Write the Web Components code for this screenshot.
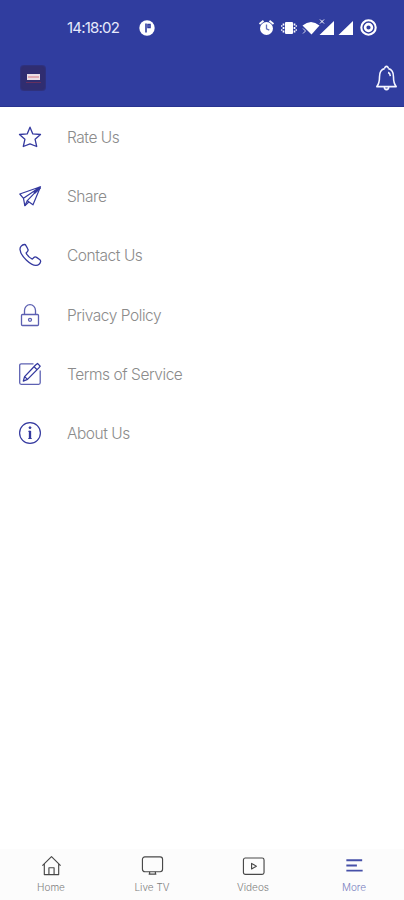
<!DOCTYPE html>
<html lang="en">
<head>
<meta charset="utf-8">
<title>More</title>
<style>
    html, body {
        height: 100%;
        margin: 0;
    }
    body {
        font-family: Inter, "Liberation Sans", sans-serif;
        background: #fff;
        overflow: hidden;
    }
</style>
</head>
<body>

<more-screen>
    <status-bar slot="header" time="14:18:02"></status-bar>
    <app-bar slot="header"></app-bar>

    <menu-row icon="star">Rate Us</menu-row>
    <menu-row icon="plane">Share</menu-row>
    <menu-row icon="phone">Contact Us</menu-row>
    <menu-row icon="lock">Privacy Policy</menu-row>
    <menu-row icon="edit">Terms of Service</menu-row>
    <menu-row icon="info">About Us</menu-row>

    <tab-item slot="tabs" icon="home">Home</tab-item>
    <tab-item slot="tabs" icon="tv">Live TV</tab-item>
    <tab-item slot="tabs" icon="video">Videos</tab-item>
    <tab-item slot="tabs" icon="more" active>More</tab-item>
</more-screen>

<script>

    // every icon is drawn in a 24 x 24 box
    const ICONS = {
        star: '<path d="M12 2.200 14.800 8.900l7.700.6-5.400 4.800 1.600 7.200-6.700-2.600-6.700 2.600 1.600-7.200L1.500 9.500l7.700-.6z"/>',
        plane: '<g stroke-width="1.200"><path d="M22.500 2.800 1.800 10l3.700 4.300zM5.500 14.300l1.300 7.400 3.700-3.400M22.500 2.800 9.300 16.700l5.700 4.100z"/><path d="M9.300 16.700l-2.500 5"/></g><path d="m22 3.500-6 5.500" stroke-width="2.600"/>',
        phone: '<path d="M6.300 1.500C4 1.800 1.800 4 2 6.500c.3 3.400 3.200 7.600 6.500 10.700 3.200 3 6.500 5.300 9.500 5.200 2.200-.1 4.200-1.700 4.600-3.700.2-1-.2-1.600-1-2.200l-3-2.100c-1-.7-1.900-.7-2.700.1l-1.600 1.600c-2.700-1.200-4.900-3.400-6.200-6.100l1.300-1.400c.9-.9.900-1.800.3-2.800L8 2.600c-.4-.8-.9-1.200-1.700-1.100z"/>',
        lock: '<g stroke-width="1.300" opacity=".8"><rect x="3.500" y="11.500" width="17" height="11" rx="1"/><path d="M6.500 11.500V7.500a5.500 5.800 0 0 1 11 0v4"/><circle cx="12" cy="16.800" r="1.500"/></g>',
        edit: '<path d="M15.500 1.800H3.200c-.9 0-1.500.6-1.500 1.500v17.500c0 .9.600 1.500 1.500 1.500h17.500c.9 0 1.500-.6 1.500-1.500V8.500" opacity=".8"/><path d="m17.600 3 1.900-1.500 2.700 2.600-1.600 2L9.500 17.400l-4.200 1.700 1.300-4.500zM16 4.600l3.100 3.100M6.600 14.600l2.900 2.800"/>',
        info: '<circle cx="12" cy="12" r="10.400" stroke-width="1.200"/><path d="M12 9.800v8.200" stroke-width="2.300"/><path d="M10.300 10.300h1.700M10.300 17.500h3.400" stroke-width="1"/><circle cx="12" cy="6.700" r="1" fill="currentColor" stroke-width=".8"/>',
        home: '<path d="M2.500 12.200 12 2.800l9.500 9.400M4.500 10.500v11h15v-11M9.300 21.500v-7.200h5.400v7.200"/>',
        tv: '<rect x="1.500" y="3" width="21" height="15.500" rx="2.500"/><path d="M9 18.500v2.200m6-2.200v2.200M8 21h8"/>',
        video: '<rect x="1.500" y="4.200" width="21.500" height="17" rx="2"/><path d="M10 9.800v5.800l5-2.900z"/>',
        more: '<path d="M3.500 6.500h16.500M3.500 12h11M3.500 17.300h17" stroke-width="1.900"/>',
        bell: '<path d="M10.200 3.800a1.800 1.800 0 1 1 3.600 0M10.200 3.800C6.800 4.500 5.300 7 5.300 10.500c0 4-.5 6-2.600 8.200h18.600c-2.100-2.200-2.600-4.200-2.600-8.200 0-3.500-1.500-6-4.900-6.700M9.900 19a2.100 2.100 0 0 0 4.200 0M13.500 7c1.500.5 2 1.500 2.200 3"/>'
    };

    function icon(name) {
        return `<svg viewBox="0 0 24 24" preserveAspectRatio="none" fill="none" stroke="currentColor" stroke-linejoin="round">${ICONS[name]}</svg>`;
    }

    class BaseElement extends HTMLElement {

        constructor() {
            super();
            this.attachShadow({mode: 'open'});
        }

        connectedCallback() {
            this.shadowRoot.innerHTML = this.render();
        }

    }

    customElements.define('more-screen', class extends BaseElement {

        render() {
            return `
                <style>
                    :host {
                        display: flex;
                        flex-direction: column;
                        height: 900px;
                    }
                    header {
                        height: 107px;
                        box-sizing: border-box;
                        background: #303d9f;
                        border-bottom: 1px solid #28338f;
                    }
                    main {
                        flex: 1;
                        padding-top: 0.5px;
                    }
                    nav {
                        display: flex;
                        height: 51px;
                        background: #fcfcfc;
                    }
                </style>
                <header><slot name="header"></slot></header>
                <main><slot></slot></main>
                <nav><slot name="tabs"></slot></nav>
            `;
        }

    });

    customElements.define('status-bar', class extends BaseElement {

        render() {
            return `
                <style>
                    :host {
                        display: flex;
                        align-items: center;
                        height: 56px;
                        padding-left: 67px;
                        color: #e6e9fb;
                    }
                    time {
                        width: 72px;
                        padding-bottom: 1px;
                        font-size: 15px;
                        letter-spacing: -0.8px;
                        white-space: nowrap;
                    }
                    .system {
                        margin-left: 103px;
                    }
                    svg {
                        display: block;
                    }
                </style>
                <time>${this.getAttribute('time')}</time>
                <svg width="16" height="16" viewBox="0 0 16 16">
                    <circle cx="8" cy="8" r="7.700" fill="#fff"/>
                    <path d="M7 3.500v9M9 4.500h2v3H9z" fill="none" stroke="#303d9f" stroke-width="1.600"/>
                </svg>
                <svg class="system" width="122" height="20" viewBox="0 0 122 20" fill="#fff">
                    <!-- alarm -->
                    <circle cx="8.500" cy="10.500" r="6.500"/>
                    <path d="m1.500 6 4-3.200M15.500 6l-4-3.200" stroke="#fff" stroke-width="1.800"/>
                    <path d="M8.500 6.500v4.300l2.800 1.400" fill="none" stroke="#6570bb" stroke-width="1.300"/>
                    <!-- vibrate -->
                    <rect x="27" y="4" width="8" height="12" rx="1"/>
                    <path d="M25.500 5.500v9M36.500 5.500v9" stroke="#fff" stroke-width="1.700" stroke-dasharray="2 1.500"/>
                    <path d="M23.800 7v6M38.200 7v6" stroke="#fff" stroke-width="1" stroke-dasharray="2 2"/>
                    <!-- wifi -->
                    <path d="M44.500 7.500q8.500-7 17 0L53.500 16.500z"/>
                    <path d="m45 10.500 2.500 2.500-2.500 2.500" fill="none" stroke="#fff" opacity=".8"/>
                    <!-- signal -->
                    <path d="M61.500 17 76 3v14zM80.500 17 95 3v14z"/>
                    <path d="m62 1.500 4 4m0-4-4 4" stroke="#fff"/>
                    <!-- data saver -->
                    <g fill="none" stroke="#fff">
                        <circle cx="110.500" cy="9.500" r="7.200" stroke-width="2.100"/>
                        <circle cx="110.500" cy="9.500" r="3.400" stroke-width="2.600"/>
                    </g>
                </svg>
            `;
        }

    });

    customElements.define('app-bar', class extends BaseElement {

        render() {
            return `
                <style>
                    :host {
                        display: flex;
                        align-items: center;
                        justify-content: space-between;
                        height: 44px;
                        padding: 0 5px 0 20px;
                        color: #f4f5ff;
                    }
                    .logo {
                        display: grid;
                        place-content: center;
                        justify-items: center;
                        gap: 2px;
                        width: 26px;
                        height: 26px;
                        border-radius: 4px;
                        background: #302d70;
                        box-shadow: inset 0 0 2px #303d9f;
                    }
                    .logo i {
                        width: 11px;
                        height: 2px;
                        border: solid #eadde5;
                        border-width: 2px 1px 2px;
                        background: #dfa9b2;
                    }
                    .logo b {
                        width: 15px;
                        height: 1px;
                        background: #65305f;
                    }
                    .bell {
                        display: flex;
                    }
                    .bell svg {
                        width: 25px;
                        height: 29px;
                        stroke-width: 1.5;
                    }
                </style>
                <span class="logo"><i></i><b></b></span>
                <span class="bell">${icon('bell')}</span>
            `;
        }

    });

    customElements.define('menu-row', class extends BaseElement {

        render() {
            return `
                <style>
                    :host {
                        display: flex;
                        align-items: center;
                        gap: 25px;
                        height: 59.2px;
                        padding-left: 18px;
                        color: #8b8b8b;
                        font-size: 15.5px;
                        font-weight: 300;
                        letter-spacing: -0.45px;
                    }
                    svg {
                        width: 24px;
                        height: 24px;
                        color: #34399f;
                        stroke-width: 1.3;
                    }
                    span {
                        padding-top: 1px;
                    }
                </style>
                ${icon(this.getAttribute('icon'))}
                <span><slot></slot></span>
            `;
        }

    });

    customElements.define('tab-item', class extends BaseElement {

        render() {
            return `
                <style>
                    :host {
                        display: flex;
                        flex: 1;
                        flex-direction: column;
                        align-items: center;
                        padding: 5px 0 0 1px;
                        color: #808080;
                        font-size: 10px;
                        font-weight: 300;
                        line-height: 14px;
                    }
                    svg {
                        width: 23px;
                        height: 23px;
                        margin-bottom: 3px;
                        color: #484848;
                        stroke-width: 1.2;
                    }
                    :host([active]) {
                        color: #7a80c0;
                    }
                    :host([active]) svg {
                        color: #4650a8;
                    }
                </style>
                ${icon(this.getAttribute('icon'))}
                <span><slot></slot></span>
            `;
        }

    });

</script>
</body>
</html>
